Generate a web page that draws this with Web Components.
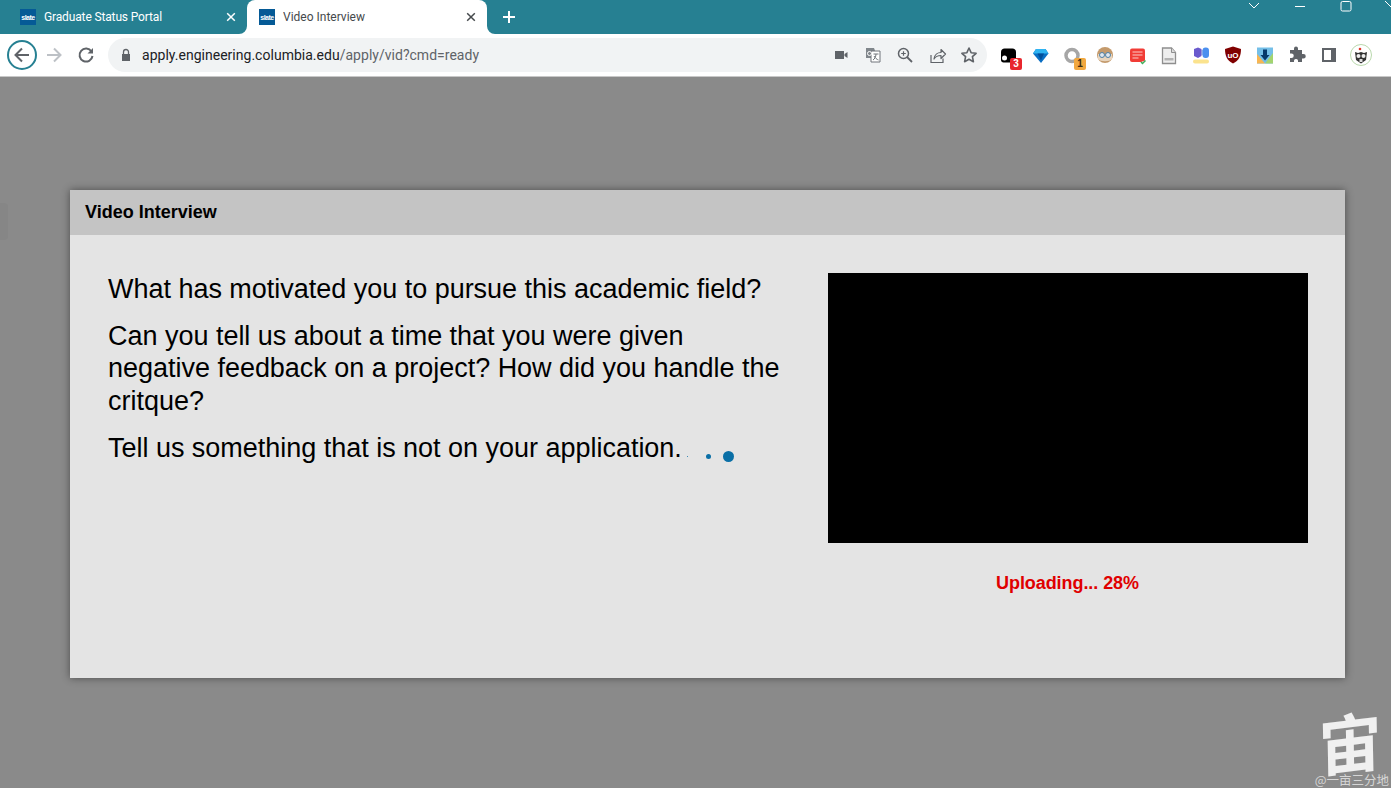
<!DOCTYPE html>
<html lang="en">
<head>
<meta charset="utf-8">
<title>Video Interview</title>
<style>
  html, body { margin: 0; height: 100%; overflow: hidden; background: #8a8a8a; }
  body { display: flex; flex-direction: column; height: 788px; position: relative; }
</style>
</head>
<body>
<browser-tabstrip>
  <browser-tab title-text="Graduate Status Portal"></browser-tab>
  <browser-tab title-text="Video Interview" active></browser-tab>
</browser-tabstrip>
<browser-toolbar url-host="apply.engineering.columbia.edu" url-path="/apply/vid?cmd=ready"></browser-toolbar>
<page-backdrop>
  <interview-card heading="Video Interview" status="Uploading... 28%">
    <p>What has motivated you to pursue this academic field?</p>
    <p>Can you tell us about a time that you were given negative feedback on a project? How did you handle the critque?</p>
    <p>Tell us something that is not on your application.<loading-dots></loading-dots></p>
  </interview-card>
</page-backdrop>
<site-watermark></site-watermark>

<script>
const UI_FONT = "Roboto, 'Open Sans', sans-serif";

class BrowserTab extends HTMLElement {
  constructor() {
    super();
    this.attachShadow({ mode: 'open' });
  }

  connectedCallback() {
    const title = this.getAttribute('title-text') || '';
    this.shadowRoot.innerHTML = `
      <style>
        :host {
          display: flex;
          align-items: center;
          box-sizing: border-box;
          height: 34px;
          width: 240px;
          padding: 0 8px 0 12px;
          color: #fff;
          font: 12px ${UI_FONT};
          position: relative;
        }
        :host([active]) {
          background: #fff;
          color: #45494c;
          border-radius: 8px 8px 0 0;
        }
        :host(:not([active])) {
          width: 247px;
          padding-left: 20px;
          letter-spacing: -.14px;
        }
        .fav {
          flex: none;
          width: 16px;
          height: 16px;
          background: #055a96;
          color: #fff;
          font: bold 7px 'Liberation Sans', sans-serif;
          letter-spacing: -.5px;
          display: flex;
          align-items: center;
          justify-content: center;
        }
        .title { flex: 1; margin-left: 8px; white-space: nowrap; overflow: hidden; }
        svg { flex: none; display: block; }
        .corner { position: absolute; bottom: 0; width: 8px; height: 8px; display: none; }
        :host([active]) .corner { display: block; }
        .l { left: -8px; }
        .r { right: -8px; }
      </style>
      <svg class="corner l" viewBox="0 0 8 8"><path d="M8 0v8H0a8 8 0 0 0 8-8z" fill="#fff"/></svg>
      <span class="fav">slate</span>
      <span class="title">${title}</span>
      <svg width="16" height="16" viewBox="0 0 16 16"><path d="M4.200 4.200l7.600 7.600M11.800 4.200l-7.600 7.600" stroke="currentColor" stroke-width="1.500" fill="none"/></svg>
      <svg class="corner r" viewBox="0 0 8 8"><path d="M0 0v8h8a8 8 0 0 1-8-8z" fill="#fff"/></svg>
    `;
  }
}

class BrowserTabstrip extends HTMLElement {
  constructor() {
    super();
    this.attachShadow({ mode: 'open' });
  }

  connectedCallback() {
    this.shadowRoot.innerHTML = `
      <style>
        :host {
          display: flex;
          flex: none;
          height: 34px;
          background: #268092;
          color: #fff;
        }
        .tabs { display: flex; }
        .plus { margin-left: 11px; align-self: center; display: block; }
        .win { margin-left: auto; display: flex; align-self: flex-start; height: 12px; }
        .win svg { display: block; }
      </style>
      <div class="tabs"><slot></slot></div>
      <svg class="plus" width="22" height="22" viewBox="0 0 22 22"><path d="M11 5v12M5 11h12" stroke="#fff" stroke-width="2"/></svg>
      <div class="win">
        <svg width="46" height="12" viewBox="0 0 46 12"><path d="M18 3l5 5 5-5" stroke="#fff" fill="none"/></svg>
        <svg width="46" height="12" viewBox="0 0 46 12"><path d="M18 6.500h10" stroke="#fff"/></svg>
        <svg width="46" height="12" viewBox="0 0 46 12"><rect x="18" y="1.500" width="10" height="9.500" rx="1.500" stroke="#fff" fill="none"/></svg>
        <svg width="22" height="12" viewBox="0 0 22 12"><path d="M16 1l6 6" stroke="#fff" fill="none"/></svg>
      </div>
    `;
  }
}

const OMNI_ICONS = [
  '<path d="M4 6h9v8H4zM13.500 9l3-2v6l-3-2z" fill="#5f6368"/>',
  '<path d="M3 3h8l1 2.500V13H3z" fill="#80868b"/><path d="M8 6h9v11H8z" fill="#fff" stroke="#70757a"/><path d="M10.500 9h5M13 9c0 3-1.500 5-3 6M11 11c1 2 3 3.500 4.500 4" stroke="#70757a" fill="none"/><circle cx="6.500" cy="8.500" r="2" fill="none" stroke="#fff"/>',
  '<circle cx="8.500" cy="8.500" r="5" fill="none" stroke="#5f6368" stroke-width="1.500"/><path d="M12 12l5 5" stroke="#5f6368" stroke-width="1.800"/><path d="M6.200 8.500h4.600M8.500 6.200v4.600" stroke="#5f6368" stroke-width="1.200"/>',
  '<path d="M4 10v7.500h12v-4" fill="none" stroke="#5f6368" stroke-width="1.200"/><path d="M7 14c.5-4 3.500-6.500 7-6.500V4.500l4.500 4.500-4.500 4.500v-3c-3 0-5.500 1-7 3.500z" fill="none" stroke="#5f6368" stroke-width="1.200" stroke-linejoin="round"/>',
  '<path d="M10 3l2.100 4.700 5 .6-3.700 3.400 1 5-4.400-2.500-4.400 2.500 1-5-3.700-3.400 5-.6z" fill="none" stroke="#5f6368" stroke-width="1.600" stroke-linejoin="round"/>'
];

const EXT_ICONS = [
  { svg: '<path d="M2 7C2 5 3.500 3.500 5.500 3.500h8c2 0 3.500 1.500 3.500 3.500v8c0 1.500-1 2.500-2.500 2.500h-10C3 17.500 2 16.500 2 15z" fill="#000"/><circle cx="5.500" cy="13" r="2.500" fill="#fff"/>', badge: '3', color: '#e8262d' },
  { svg: '<path d="M5 4h9.500l3 4.500L10 18 2 8.500z" fill="#0a6fc4"/><path d="M5 4h9.500l3 4.500H2z" fill="#2fb4f2"/><path d="M6.500 8.500h6.500L10 15.500z" fill="#024f9a"/>' },
  { svg: '<circle cx="9" cy="10.500" r="6" fill="none" stroke="#a6a6a6" stroke-width="3.500"/>', badge: '1', color: '#f2a840', dark: true },
  { svg: '<circle cx="10" cy="10" r="8" fill="#c49a6c"/><path d="M3 9h14v5c-2 3-12 3-14 0z" fill="#e7d4bd"/><circle cx="7" cy="10" r="2.500" fill="#dfe7ee" stroke="#4d7fa5"/><circle cx="13" cy="10" r="2.500" fill="#dfe7ee" stroke="#4d7fa5"/>' },
  { svg: '<rect x="3" y="3.500" width="15" height="13.500" rx="2" fill="#f13c36"/><path d="M5.500 7h10M5.500 10h10M5.500 13h6" stroke="#fbc9c6" stroke-width="1.200"/><path d="M14 17l1.500 1.500 3-3" stroke="#3fae5a" stroke-width="1.500" fill="#fff"/>' },
  { svg: '<path d="M3.500 3h9l4 4.500v11h-13z" fill="#eee" stroke="#8f8f8f" stroke-width="1.300"/><path d="M12.500 3v4.500h4" fill="#ddd" stroke="#8f8f8f"/><rect x="5.500" y="13" width="9" height="2.500" fill="#b3b3b3"/>' },
  { svg: '<rect x="2" y="14.500" width="16" height="4" rx="2" fill="#fbe38e"/><path d="M3 4l4-1.500L10.500 4v7l-3.500 2-4-2z" fill="#6a5acd"/><path d="M10.500 5h1v5h-1z" fill="#6a80d8"/><rect x="11.500" y="2.500" width="6.500" height="10.500" rx="3" fill="#4a90ef"/>' },
  { svg: '<path d="M10 1.500l8 2.500c0 7-2 11.500-8 14.500C4 15.500 2 11 2 4z" fill="#800000"/><text x="10" y="12.500" text-anchor="middle" font-family="Liberation Sans" font-size="8" font-weight="bold" fill="#fff">uO</text>' },
  { svg: '<rect x="2" y="2.500" width="16" height="16" fill="#74bfe8"/><path d="M2 9l8 9.500H2z" fill="#f8b652"/><path d="M18 8l-8 10.500h8z" fill="#a3d46f"/><path d="M8 4.500h4V10h2.500L10 15.500 5.500 10H8z" fill="#05386b"/>' },
  { svg: '<path d="M7 3.500a2 2 0 0 1 4 0V5h4v4h1.500a2.200 2.200 0 0 1 0 4.500H15V17h-4v-1.500a2.100 2.100 0 0 0-4 0V17H3v-4h1.500a2.200 2.200 0 0 0 0-4.500H3V5h4z" fill="#5f6368"/>' },
  { svg: '<path d="M3 3h14v14H3z" fill="#5f6368"/><path d="M5 5h7v10H5z" fill="#fff"/>' },
  { svg: '<circle cx="11" cy="11" r="10.500" fill="#fff" stroke="#b9d8ad"/><path d="M5 8l3 1 3-1 3 1 3-1-1 8-5 3.500L6 16z" fill="#333"/><circle cx="8.500" cy="12" r="2" fill="#eee"/><circle cx="13.500" cy="12" r="2" fill="#eee"/><circle cx="10" cy="5" r="1.300" fill="#e0352b"/><path d="M9.500 15h3v3h-3z" fill="#ddd"/>', size: 22 }
];

class BrowserToolbar extends HTMLElement {
  constructor() {
    super();
    this.attachShadow({ mode: 'open' });
  }

  connectedCallback() {
    const host = this.getAttribute('url-host');
    const path = this.getAttribute('url-path');
    const omni = OMNI_ICONS.map(i => `<span class="btn"><svg width="20" height="20" viewBox="0 0 20 20">${i}</svg></span>`).join('');
    const exts = EXT_ICONS.map(e => {
      const s = e.size || 20;
      const badge = e.badge
        ? `<b style="background:${e.color};color:${e.dark ? '#3a2a10' : '#fff'}">${e.badge}</b>`
        : '';
      return `<span class="btn"><svg width="${s}" height="${s}" viewBox="0 0 ${s} ${s}">${e.svg}</svg>${badge}</span>`;
    }).join('');

    this.shadowRoot.innerHTML = `
      <style>
        :host {
          display: flex;
          flex: none;
          align-items: center;
          box-sizing: border-box;
          height: 43px;
          padding: 0 14px 1px 7px;
          background: #fff;
          border-bottom: 1px solid #c8c8c8;
        }
        .nav { display: flex; align-items: center; gap: 2px; }
        .nav span { width: 30px; height: 30px; display: flex; align-items: center; justify-content: center; box-sizing: border-box; }
        .back { border: 2px solid #268092; border-radius: 50%; }
        .omni {
          flex: 1;
          display: flex;
          align-items: center;
          height: 34px;
          margin-left: 7px;
          padding: 0 2px 0 10px;
          background: #f1f3f4;
          border-radius: 17px;
          font: 14px ${UI_FONT};
          letter-spacing: .02px;
          color: #202124;
        }
        .url { margin-left: 8px; flex: 1; white-space: nowrap; }
        .url span { color: #5f6368; }
        .btn {
          width: 32px;
          height: 32px;
          flex: none;
          display: flex;
          align-items: center;
          justify-content: center;
          position: relative;
        }
        .exts { display: flex; margin-left: 6px; }
        b {
          position: absolute;
          right: 3px;
          bottom: 1px;
          width: 12px;
          height: 12px;
          border-radius: 2px;
          font: bold 10px/12px 'Liberation Sans', sans-serif;
          text-align: center;
        }
      </style>
      <div class="nav">
        <span class="back"><svg width="20" height="20" viewBox="0 0 20 20"><path d="M17 10H4M10 3.500L3.500 10l6.500 6.500" fill="none" stroke="#5f6368" stroke-width="2"/></svg></span>
        <span><svg width="20" height="20" viewBox="0 0 20 20"><path d="M3 10h13M10 3.500l6.500 6.500-6.500 6.500" fill="none" stroke="#bdc1c6" stroke-width="2"/></svg></span>
        <span><svg width="20" height="20" viewBox="0 0 20 20"><path d="M15.500 6.500A6.500 6.500 0 1 0 16.500 11" fill="none" stroke="#5f6368" stroke-width="2"/><path d="M17 3v5.500h-5.500z" fill="#5f6368"/></svg></span>
      </div>
      <div class="omni">
        <svg width="16" height="16" viewBox="0 0 16 16"><path d="M4 7h8v7H4z" fill="#5f6368"/><path d="M5.500 7V5a2.500 2.500 0 0 1 5 0v2" fill="none" stroke="#5f6368" stroke-width="1.300"/></svg>
        <div class="url">${host}<span>${path}</span></div>
        ${omni}
      </div>
      <div class="exts">${exts}</div>
    `;
  }
}

class PageBackdrop extends HTMLElement {
  constructor() {
    super();
    this.attachShadow({ mode: 'open' });
  }

  connectedCallback() {
    this.shadowRoot.innerHTML = `
      <style>
        :host {
          display: block;
          flex: 1;
          box-sizing: border-box;
          padding: 113px 46px 0 70px;
          background: #8a8a8a;
          position: relative;
        }
        .ghost {
          position: absolute;
          left: 0;
          top: 126px;
          width: 8px;
          height: 37px;
          background: #868686;
          border-radius: 0 4px 4px 0;
        }
      </style>
      <div class="ghost"></div>
      <slot></slot>
    `;
  }
}

class InterviewCard extends HTMLElement {
  constructor() {
    super();
    this.attachShadow({ mode: 'open' });
  }

  connectedCallback() {
    this.shadowRoot.innerHTML = `
      <style>
        :host {
          display: block;
          height: 488px;
          background: #e4e4e4;
          box-shadow: 0 0 8px rgba(0, 0, 0, .45);
          font-family: 'Liberation Sans', Arial, sans-serif;
          color: #000;
        }
        header {
          height: 45px;
          box-sizing: border-box;
          padding: 0 15px;
          background: #c4c4c4;
          font: bold 18px/44px 'Liberation Sans', Arial, sans-serif;
        }
        .body {
          display: grid;
          grid-template-columns: 1fr 480px;
          column-gap: 40px;
          padding: 38px 37px 0 38px;
        }
        .questions { font-size: 27px; line-height: 32.4px; letter-spacing: -.02px; margin-top: -.4px; }
        ::slotted(p) { margin: 0 0 15px; }
        .video { height: 270px; background: #000; }
        .status {
          margin-top: 29px;
          text-align: center;
          color: #e00000;
          font: bold 18px/22px 'Liberation Sans', Arial, sans-serif;
          letter-spacing: -.07px;
          margin-left: -1px;
        }
      </style>
      <header>${this.getAttribute('heading')}</header>
      <div class="body">
        <div class="questions"><slot></slot></div>
        <div>
          <div class="video"></div>
          <div class="status">${this.getAttribute('status')}</div>
        </div>
      </div>
    `;
  }
}

class LoadingDots extends HTMLElement {
  constructor() {
    super();
    this.attachShadow({ mode: 'open' });
  }

  connectedCallback() {
    this.shadowRoot.innerHTML = `
      <style>
        :host {
          display: inline-block;
          position: relative;
          width: 0;
          height: 0;
        }
        i {
          position: absolute;
          background: #0a6fa6;
          border-radius: 50%;
        }
      </style>
      <i style="left:5px;top:-1px;width:1px;height:1px"></i>
      <i style="left:24px;top:-3px;width:5px;height:5px"></i>
      <i style="left:41px;top:-6px;width:11px;height:11px"></i>
    `;
  }
}

class SiteWatermark extends HTMLElement {
  constructor() {
    super();
    this.attachShadow({ mode: 'open' });
  }

  connectedCallback() {
    this.shadowRoot.innerHTML = `
      <style>
        :host {
          display: block;
          position: absolute;
          right: 2px;
          bottom: 0;
          width: 76px;
          height: 78px;
          color: #f0f0f0;
          text-align: right;
        }
        .glyph {
          position: absolute;
          right: 7px;
          top: -4px;
          font: 700 64px/68px 'Noto Sans CJK SC', sans-serif;
          transform: rotate(-7deg) skewX(-6deg);
        }
        .tag {
          position: absolute;
          right: 0;
          bottom: 1px;
          white-space: nowrap;
          color: #d6d6d6;
          font: 12.500px/15px 'Noto Sans CJK SC', sans-serif;
        }
      </style>
      <div class="glyph">宙</div>
      <div class="tag">@一亩三分地</div>
    `;
  }
}

customElements.define('browser-tab', BrowserTab);
customElements.define('browser-tabstrip', BrowserTabstrip);
customElements.define('browser-toolbar', BrowserToolbar);
customElements.define('page-backdrop', PageBackdrop);
customElements.define('interview-card', InterviewCard);
customElements.define('loading-dots', LoadingDots);
customElements.define('site-watermark', SiteWatermark);
</script>
</body>
</html>
